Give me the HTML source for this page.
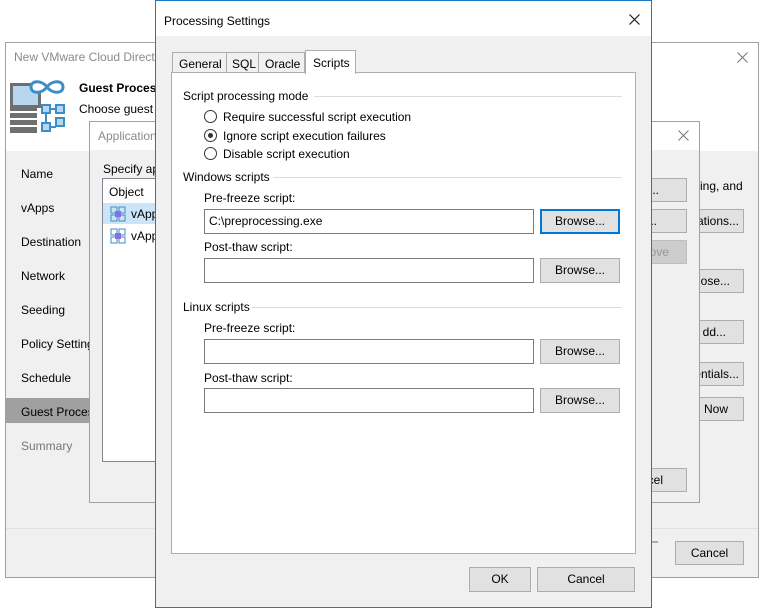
<!DOCTYPE html>
<html><head><meta charset="utf-8"><style>
*{box-sizing:border-box;margin:0;padding:0}
body{width:764px;height:611px;background:#fff;font-family:"Liberation Sans",sans-serif;font-size:12px;color:#000;position:relative;overflow:hidden}
.a{position:absolute;white-space:nowrap}
.btn{position:absolute;background:#e1e1e1;border:1px solid #adadad;text-align:center;line-height:22px;font-size:12px}
.inp{position:absolute;background:#fff;border:1px solid #7a7a7a;line-height:22px;padding-left:4px}
.rad{position:absolute;width:13px;height:13px;border:1px solid #333;border-radius:50%;background:#fff}
.line{position:absolute;height:1px;background:#dcdcdc}
</style></head><body>
<!-- back wizard -->
<div class="a" style="left:5px;top:42px;width:754px;height:536px;border:1px solid #a0a0a0;background:#f0f0f0"></div>
<div class="a" style="left:6px;top:43px;width:752px;height:108px;background:#fff"></div>
<div class="a" style="left:14px;top:50px;color:#8a8a8a">New VMware Cloud Director</div>
<svg class="a" style="left:737px;top:52px" width="11" height="11"><path d="M0.5 0.5L10.5 10.5M10.5 0.5L0.5 10.5" stroke="#777" stroke-width="1"/></svg>
<svg class="a" style="left:9px;top:75px" width="60" height="60">
<rect x="1" y="8" width="31" height="50" fill="#6f6f6f"/><rect x="4" y="11" width="25" height="19" fill="#b8d6ee"/>
<rect x="1" y="36" width="31" height="2" fill="#fff"/><rect x="1" y="43" width="31" height="2" fill="#fff"/><rect x="1" y="50" width="31" height="2" fill="#fff"/>
<rect x="28" y="33" width="8" height="25" fill="#fff"/>
<path d="M38 12c-5-7-16-7-16 0s11 7 16 0c5-7 16-7 16 0s-11 7-16 0z" fill="#fff" stroke="#3c8ec8" stroke-width="3"/>
<g fill="#b8d6ee" stroke="#3c8ec8" stroke-width="2"><rect x="33" y="30" width="8" height="8"/><rect x="47" y="30" width="8" height="8"/><rect x="33" y="48" width="8" height="8"/><rect x="47" y="43" width="8" height="8"/></g>
<path d="M37 38v10M41 52h6M55 34h-0M41 34h6" stroke="#3c8ec8" stroke-width="2"/>
</svg>
<div class="a" style="left:79px;top:81px;font-weight:bold">Guest Processing</div>
<div class="a" style="left:79px;top:102px">Choose guest</div>
<div class="a" style="left:21px;top:167px">Name</div>
<div class="a" style="left:21px;top:201px">vApps</div>
<div class="a" style="left:21px;top:235px">Destination</div>
<div class="a" style="left:21px;top:269px">Network</div>
<div class="a" style="left:21px;top:303px">Seeding</div>
<div class="a" style="left:21px;top:337px">Policy Settings</div>
<div class="a" style="left:21px;top:371px">Schedule</div>
<div class="a" style="left:6px;top:398px;width:84px;height:25px;background:#a0a0a0"></div>
<div class="a" style="left:21px;top:405px">Guest Processing</div>
<div class="a" style="left:21px;top:439px;color:#777">Summary</div>
<div class="a" style="left:700px;top:179px">ing, and</div>
<div class="btn" style="left:690px;top:209px;width:54px;text-align:right;padding-right:4px">ations...</div>
<div class="btn" style="left:690px;top:269px;width:54px;text-align:right;padding-right:13px">ose...</div>
<div class="btn" style="left:690px;top:320px;width:54px;text-align:right;padding-right:17px">dd...</div>
<div class="btn" style="left:690px;top:362px;width:54px;text-align:right;padding-right:4px">entials...</div>
<div class="btn" style="left:690px;top:397px;width:54px;text-align:right;padding-right:15px">Now</div>
<div class="line" style="left:6px;top:528px;width:752px;background:#e0e0e0"></div>
<div class="btn" style="left:600px;top:541px;width:58px"></div>
<div class="btn" style="left:675px;top:541px;width:69px">Cancel</div>
<!-- app settings -->
<div class="a" style="left:89px;top:121px;width:611px;height:382px;border:1px solid #a0a0a0;background:#f0f0f0"></div>
<div class="a" style="left:90px;top:122px;width:609px;height:28px;background:#fff"></div>
<div class="a" style="left:98px;top:129px;color:#8a8a8a">Application</div>
<svg class="a" style="left:678px;top:130px" width="11" height="11"><path d="M0.5 0.5L10.5 10.5M10.5 0.5L0.5 10.5" stroke="#777" stroke-width="1"/></svg>
<div class="a" style="left:103px;top:162px">Specify ap</div>
<div class="a" style="left:102px;top:178px;width:100px;height:284px;background:#fff;border:1px solid #828790"></div>
<div class="a" style="left:109px;top:185px">Object</div>
<div class="a" style="left:103px;top:203px;width:60px;height:21px;background:#cce4f7"></div>
<svg class="a" style="left:110px;top:206px" width="16" height="16"><g fill="none" stroke="#3c8ec8"><rect x="1" y="1" width="6" height="6"/><rect x="9" y="1" width="6" height="6"/><rect x="1" y="9" width="6" height="6"/><rect x="9" y="9" width="6" height="6"/></g><rect x="5" y="5" width="6" height="6" fill="#8a6fe0"/></svg>
<div class="a" style="left:131px;top:207px">vApp</div>
<svg class="a" style="left:110px;top:228px" width="16" height="16"><g fill="none" stroke="#3c8ec8"><rect x="1" y="1" width="6" height="6"/><rect x="9" y="1" width="6" height="6"/><rect x="1" y="9" width="6" height="6"/><rect x="9" y="9" width="6" height="6"/></g><rect x="5" y="5" width="6" height="6" fill="#8a6fe0"/></svg>
<div class="a" style="left:131px;top:229px">vApp</div>
<div class="btn" style="left:620px;top:178px;width:67px;text-align:right;padding-right:27px">d...</div>
<div class="btn" style="left:620px;top:209px;width:67px;text-align:right;padding-right:29px">t...</div>
<div class="btn" style="left:620px;top:240px;width:67px;background:#ccc;border-color:#bfbfbf;color:#999;text-align:right;padding-right:17px">ove</div>
<div class="btn" style="left:600px;top:468px;width:87px;text-align:right;padding-right:23px">cel</div>
<!-- front dialog -->
<div class="a" style="left:155px;top:0;width:497px;height:608px;border:1px solid #1979ca;background:#f0f0f0"></div>
<div class="a" style="left:156px;top:1px;width:495px;height:35px;background:#fff"></div>
<div class="a" style="left:164px;top:14px">Processing Settings</div>
<svg class="a" style="left:629px;top:14px" width="11" height="11"><path d="M0.5 0.5L10.5 10.5M10.5 0.5L0.5 10.5" stroke="#222" stroke-width="1.2"/></svg>
<div class="a" style="left:171px;top:72px;width:465px;height:482px;background:#fff;border:1px solid #adadad"></div>
<div class="a" style="left:172px;top:52px;width:55px;height:21px;border:1px solid #adadad;background:#f0f0f0;padding:4px 0 0 6px">General</div>
<div class="a" style="left:226px;top:52px;width:33px;height:21px;border:1px solid #adadad;background:#f0f0f0;padding:4px 0 0 5px">SQL</div>
<div class="a" style="left:258px;top:52px;width:47px;height:21px;border:1px solid #adadad;background:#f0f0f0;padding:4px 0 0 6px">Oracle</div>
<div class="a" style="left:305px;top:50px;width:51px;height:24px;border:1px solid #adadad;border-bottom:none;background:#fff;padding:5px 0 0 7px">Scripts</div>
<div class="a" style="left:183px;top:89px">Script processing mode</div>
<div class="line" style="left:314px;top:96px;width:308px"></div>
<div class="rad" style="left:204px;top:110px"></div>
<div class="a" style="left:223px;top:110px">Require successful script execution</div>
<div class="rad" style="left:204px;top:129px"></div><div class="a" style="left:208px;top:133px;width:5px;height:5px;border-radius:50%;background:#333"></div>
<div class="a" style="left:223px;top:129px">Ignore script execution failures</div>
<div class="rad" style="left:204px;top:147px"></div>
<div class="a" style="left:223px;top:147px">Disable script execution</div>
<div class="a" style="left:183px;top:170px">Windows scripts</div>
<div class="line" style="left:273px;top:177px;width:349px"></div>
<div class="a" style="left:204px;top:191px">Pre-freeze script:</div>
<div class="inp" style="left:204px;top:209px;width:330px;height:25px">C:\preprocessing.exe</div>
<div class="btn" style="left:540px;top:209px;width:80px;height:25px;border:2px solid #0078d7;line-height:20px">Browse...</div>
<div class="a" style="left:204px;top:240px">Post-thaw script:</div>
<div class="inp" style="left:204px;top:258px;width:330px;height:25px"></div>
<div class="btn" style="left:540px;top:258px;width:80px;height:25px">Browse...</div>
<div class="a" style="left:183px;top:300px">Linux scripts</div>
<div class="line" style="left:252px;top:307px;width:370px"></div>
<div class="a" style="left:204px;top:321px">Pre-freeze script:</div>
<div class="inp" style="left:204px;top:339px;width:330px;height:25px"></div>
<div class="btn" style="left:540px;top:339px;width:80px;height:25px">Browse...</div>
<div class="a" style="left:204px;top:371px">Post-thaw script:</div>
<div class="inp" style="left:204px;top:388px;width:330px;height:25px"></div>
<div class="btn" style="left:540px;top:388px;width:80px;height:25px">Browse...</div>
<div class="btn" style="left:469px;top:567px;width:62px;height:25px">OK</div>
<div class="btn" style="left:537px;top:567px;width:98px;height:25px">Cancel</div>
</body></html>
